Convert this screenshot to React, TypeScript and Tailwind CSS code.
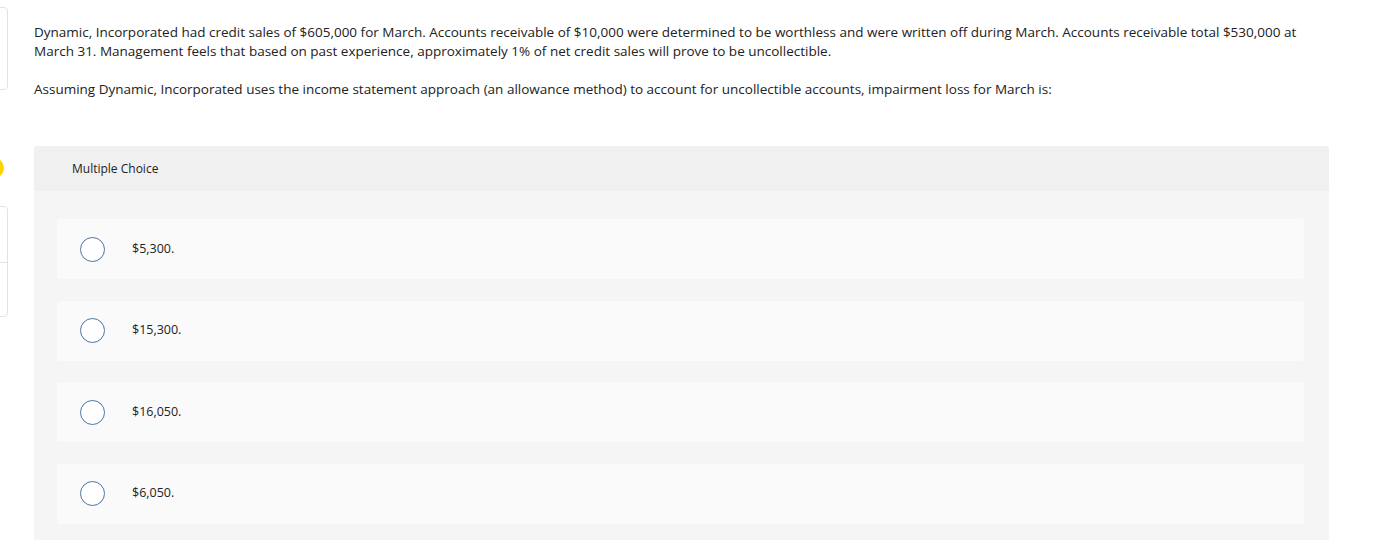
import React from "react";

const options = ["$5,300.", "$15,300.", "$16,050.", "$6,050."];

export default function App() {
  return (
    <div className="relative w-[1381px] h-[540px] overflow-hidden bg-white font-['Open_Sans','Liberation_Sans',sans-serif] text-[#222]">
      {/* left edge stubs */}
      <div className="absolute left-[-20px] top-[7px] w-[28px] h-[83px] rounded-[4px] border border-[#e2e2e2]" />
      <div className="absolute left-[-16px] top-[158px] w-[20px] h-[20px] rounded-full bg-[#ffd200]" />
      <div className="absolute left-[-20px] top-[206px] w-[28px] h-[111px] rounded-[4px] border border-[#e2e2e2] flex flex-col">
        <div className="h-[56px] border-b border-[#e2e2e2]" />
      </div>

      <div className="pl-[34px] pr-[52px] pt-[23px]">
        <p className="text-[13.5px] leading-[19px]">
          Dynamic, Incorporated had credit sales of $605,000 for March. Accounts receivable of $10,000 were determined to be worthless and were written off during March. Accounts receivable total $530,000 at March 31. Management feels that based on past experience, approximately 1% of net credit sales will prove to be uncollectible.
        </p>
        <p className="mt-[19px] text-[13.5px] leading-[19px]">
          Assuming Dynamic, Incorporated uses the income statement approach (an allowance method) to account for uncollectible accounts, impairment loss for March is:
        </p>

        <div className="mt-[47px] w-[1295px] rounded-t-[3px] overflow-hidden">
          <div className="h-[45px] bg-[#f0f0f0] flex items-center pl-[38px] text-[12px] text-[#222]">
            Multiple Choice
          </div>
          <div className="bg-[#f5f5f5] pl-[23px] pr-[25px] pt-[28px] pb-[20px] flex flex-col gap-[21.5px]">
            {options.map((o) => (
              <div key={o} className="h-[60px] bg-[#fafafa] rounded-[2px] flex items-center pl-[23px]">
                <div className="w-[25px] h-[25px] rounded-full border-[1.5px] border-[#4d74a3] bg-white" />
                <span className="ml-[27px] text-[12.5px] text-[#222]">{o}</span>
              </div>
            ))}
          </div>
        </div>
      </div>
    </div>
  );
}
